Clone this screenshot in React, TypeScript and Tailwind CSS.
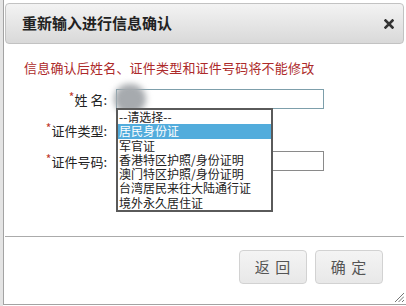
import React from "react"

const options = [
  "--请选择--",
  "居民身份证",
  "军官证",
  "香港特区护照/身份证明",
  "澳门特区护照/身份证明",
  "台湾居民来往大陆通行证",
  "境外永久居住证",
]

const font = { fontFamily: '"Noto Sans CJK SC", "Liberation Sans", sans-serif' }

function Label({ text }: { text: string }) {
  return (
    <div className="w-[102px] flex justify-end items-center text-[13px] text-[#222] leading-none">
      <span className="text-[#c0392b] text-[12px] -mt-[4px]">*</span>
      <span>{text}</span>
    </div>
  )
}

export default function App() {
  return (
    <div className="w-[406px] h-[306px] flex bg-white overflow-hidden" style={font}>
      {/* page behind the dialog */}
      <div className="w-[3px] h-full bg-[#e4e4e4]" />

      <div className="relative flex-1 h-[305px] flex flex-col border-l border-b border-[#a3a3a3] pl-[1px] pr-[2px]">
        {/* Header */}
        <div className="mt-[3px] h-[41px] flex items-center justify-between rounded-[4px] border border-[#c2c2c2] bg-gradient-to-b from-[#f3f3f3] to-[#d9d9d9] pl-[16px] pr-[9px]">
          <span className="text-[15px] font-bold text-[#222]">重新输入进行信息确认</span>
          <svg width="10" height="10" viewBox="0 0 10 10" className="mt-[1px]">
            <path d="M1.5 1.5 L8.5 8.5 M8.5 1.5 L1.5 8.5" stroke="#333" strokeWidth="2.6" strokeLinecap="square" />
          </svg>
        </div>

        {/* Notice */}
        <p className="mt-[15px] pl-[19px] text-[13px] leading-[18px] text-[#ad2a2a] tracking-[0.2px]">
          信息确认后姓名、证件类型和证件号码将不能修改
        </p>

        {/* Form */}
        <div className="mt-[12px] flex flex-col gap-[11px]">
          <div className="h-[20px] flex items-center gap-[9px]">
            <Label text="姓 名:" />
            <div className="w-[208px] h-[20px] border border-[#7d9fab] bg-white" />
          </div>
          <div className="h-[20px] flex items-center gap-[9px]">
            <Label text="证件类型:" />
            <div className="w-[150px] h-[19px] border border-[#8a8a8a] bg-white" />
          </div>
          <div className="h-[20px] flex items-center gap-[9px]">
            <Label text="证件号码:" />
            <div className="w-[208px] h-[20px] border border-[#8a8a8a] bg-white" />
          </div>
        </div>

        {/* Footer */}
        <div className="mt-[65px] h-px bg-[#ababab]" />
        <div className="mt-[13px] flex justify-end gap-[8px] pr-[21px]">
          {["返 回", "确 定"].map((t) => (
            <button
              key={t}
              className="w-[68px] h-[34px] rounded-[4px] border border-[#d2d2d2] bg-gradient-to-b from-[#f4f4f4] to-[#e8e8e8] text-[15px] text-[#555] tracking-[1px]"
            >
              {t}
            </button>
          ))}
        </div>

        {/* resize grip */}
        <svg width="10" height="10" viewBox="0 0 10 10" className="absolute right-[2px] bottom-[2px]">
          <path d="M10 1 L1 10 M10 4.5 L4.5 10 M10 8 L8 10" stroke="#666" strokeWidth="0.9" />
        </svg>

        {/* privacy blur over the name */}
        <div className="absolute left-[110px] top-[84px] w-[32px] h-[30px] rounded-full bg-[#a6aaae] blur-[3px]" />

        {/* open dropdown list */}
        <div className="absolute left-[112px] top-[108px] w-[157px] border-2 border-[#5a5a5a] bg-white py-[0px]">
          {options.map((o, i) => (
            <div
              key={o}
              className={
                "h-[14.3px] leading-[14.3px] pl-[1px] text-[12px] whitespace-nowrap " +
                (i === 1 ? "bg-[#52acdc] text-white" : "text-[#222]")
              }
            >
              {o}
            </div>
          ))}
        </div>
      </div>
    </div>
  )
}
